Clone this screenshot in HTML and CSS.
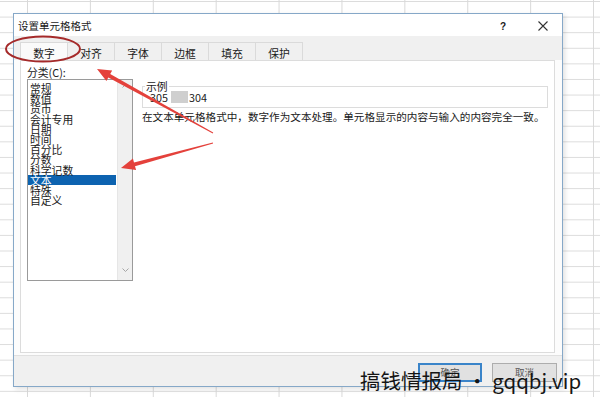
FILE: index.html
```html
<!DOCTYPE html>
<html lang="zh-CN">
<head>
<meta charset="utf-8">
<title>设置单元格格式</title>
<link rel="stylesheet" href="styles.css">
</head>
<body>
<div class="dialog">
  <div class="titlebar">
    <span class="title">设置单元格格式</span>
    <span class="help">?</span>
    <span class="close"><svg width="10" height="10" viewBox="0 0 10 10"><path d="M0.5 0.5 L9.5 9.5 M9.5 0.5 L0.5 9.5" stroke="#333" stroke-width="1.1" fill="none"/></svg></span>
  </div>
  <div class="tabs">
    <div class="tab active">数字</div>
    <div class="tab">对齐</div>
    <div class="tab">字体</div>
    <div class="tab">边框</div>
    <div class="tab">填充</div>
    <div class="tab">保护</div>
  </div>
  <div class="body">
    <div class="panel">
      <div class="cat">
        <div class="label">分类(<u>C</u>):</div>
        <div class="listbox">
          <ul class="items">
            <li>常规</li>
            <li>数值</li>
            <li>货币</li>
            <li>会计专用</li>
            <li>日期</li>
            <li>时间</li>
            <li>百分比</li>
            <li>分数</li>
            <li>科学记数</li>
            <li class="sel">文本</li>
            <li>特殊</li>
            <li>自定义</li>
          </ul>
          <div class="scrollbar">
            <svg width="7" height="4" viewBox="0 0 7 4"><path d="M0.5 3.5 L3.5 0.5 L6.5 3.5" stroke="#a6a6a6" fill="none"/></svg>
            <svg width="7" height="4" viewBox="0 0 7 4"><path d="M0.5 0.5 L3.5 3.5 L6.5 0.5" stroke="#a6a6a6" fill="none"/></svg>
          </div>
        </div>
      </div>
      <div class="detail">
        <fieldset class="sample">
          <legend>示例</legend>
          <div class="value">305<span class="blur"></span>304</div>
        </fieldset>
        <p class="desc">在文本单元格格式中，数字作为文本处理。单元格显示的内容与输入的内容完全一致。</p>
      </div>
    </div>
  </div>
  <div class="footer">
    <button class="btn default">确定</button>
    <button class="btn">取消</button>
  </div>
</div>
<svg class="annot" width="600" height="397" viewBox="0 0 600 397">
  <ellipse cx="43" cy="49" rx="37" ry="12.5" fill="none" stroke="#a52a2a" stroke-width="2"/>
  <polygon points="213.2,132.6 110.2,74.0 112.2,70.5 97,69 106.4,81.0 108.3,77.5 212.8,133.4" fill="#e4413b"/>
  <polygon points="212.9,142.5 134.0,162.4 132.9,158.5 121,168 136.1,170.1 135.0,166.2 213.1,143.5" fill="#e4413b"/>
</svg>
<div class="watermark">搞钱情报局 · gqqbj.vip</div>
</body>
</html>
```
FILE: styles.css
```css
html, body {
  margin: 0;
  padding: 0;
}
body {
  width: 600px;
  height: 397px;
  overflow: hidden;
  position: relative;
  box-sizing: border-box;
  padding: 13px 0 0 13px;
  background-color: #ffffff;
  background-image:
    linear-gradient(to right, #d9d9d9 1px, transparent 1px),
    linear-gradient(to bottom, #dcdcdc 1px, transparent 1px);
  background-size: 62.9px 15.6px, 62.9px 15.6px;
  background-position: 27px 1px, 27px 1px;
  font-family: "Noto Sans CJK SC", "Noto Sans", sans-serif;
  color: #1a1a1a;
}
.dialog {
  width: 550px;
  height: 374px;
  box-sizing: border-box;
  border: 1px solid #86a8c8;
  background: #fcfcfc;
  display: flex;
  flex-direction: column;
  box-shadow: 2px 2px 5px rgba(0, 0, 0, 0.12);
}
.titlebar {
  height: 22px;
  display: flex;
  align-items: center;
  padding: 2px 14px 0 4px;
  box-sizing: border-box;
  background: #ffffff;
  font-size: 10.5px;
}
.title {
  flex: 1;
  line-height: 20px;
}
.help {
  width: 10px;
  text-align: center;
  font-family: "Liberation Sans", sans-serif;
  font-weight: bold;
  font-size: 10px;
  margin-right: 30px;
}
.close {
  width: 10px;
  height: 10px;
  display: flex;
}
.tabs {
  height: 24px;
  box-sizing: border-box;
  background: #f0f0f0;
  padding-left: 6px;
  display: flex;
  align-items: flex-end;
}
.tab {
  width: 47px;
  height: 18px;
  box-sizing: border-box;
  padding-top: 2px;
  line-height: 16px;
  text-align: center;
  font-size: 10.8px;
  border: 1px solid #dadada;
  border-bottom: none;
  border-left: none;
  background: #f0f0f0;
}
.tab.active {
  width: 48px;
  border-left: 1px solid #dadada;
  background: #fafafa;
}
.body {
  flex: 1;
  padding: 0 7px 2px 6px;
  background: #fcfcfc;
  display: flex;
}
.panel {
  flex: 1;
  box-sizing: border-box;
  border: 1px solid #dcdcdc;
  background: #ffffff;
  padding: 5px 6px 0 6px;
  display: flex;
  gap: 9px;
}
.cat {
  width: 106px;
  display: flex;
  flex-direction: column;
}
.label {
  font-size: 10.8px;
  line-height: 13px;
  height: 13px;
}
.label u {
  text-decoration: none;
}
.listbox {
  height: 202px;
  box-sizing: border-box;
  border: 1px solid #9a9a9a;
  display: flex;
  background: #fff;
}
.items {
  list-style: none;
  margin: 0;
  padding: 3px 0 0 0;
  flex: 1;
}
.items li {
  font-size: 10.8px;
  line-height: 10.2px;
  height: 10.2px;
  padding-left: 2px;
  white-space: nowrap;
  margin-right: 1px;
}
.items li.sel {
  background: #0d63b0;
  color: #ffffff;
}
.scrollbar {
  width: 14px;
  background: #f0f0f0;
  border-left: 1px solid #e6e6e6;
  display: flex;
  flex-direction: column;
  justify-content: space-between;
  align-items: center;
  padding: 4px 0 8px;
}
.detail {
  flex: 1;
  padding-top: 14px;
}
.sample {
  margin: 0;
  padding: 0 6px 4px 7px;
  border: 1px solid #dcdcdc;
  min-width: 0;
}
.sample legend {
  font-size: 10.8px;
  line-height: 12px;
  padding: 0 1px;
  margin-left: -5px;
}
.value {
  font-size: 10.8px;
  line-height: 12px;
  height: 12px;
  margin-top: -1px;
  display: flex;
  align-items: center;
}
.blur {
  display: inline-block;
  width: 17px;
  height: 12px;
  margin: 0 1px 0 3px;
  background: #cfcfcf;
}
.desc {
  margin: 3px 0 0 0;
  font-size: 10.6px;
  line-height: 12px;
  white-space: nowrap;
}
.footer {
  height: 31px;
  box-sizing: border-box;
  background: #f0f0f0;
  border-top: 1px solid #e0e0e0;
  display: flex;
  justify-content: flex-end;
  align-items: flex-start;
  gap: 10px;
  padding: 7px 5px 0 0;
}
.btn {
  height: 19px;
  width: 65px;
  box-sizing: border-box;
  border: 1px solid #adadad;
  background: #e1e1e1;
  font-family: "Noto Sans CJK SC", sans-serif;
  font-size: 9.5px;
  line-height: 15px;
  padding: 0;
  color: #555;
}
.btn.default {
  width: 64px;
  border: 2px solid #3a84c9;
}
.annot {
  position: absolute;
  left: 0;
  top: 0;
  pointer-events: none;
}
.watermark {
  position: absolute;
  left: 360px;
  top: 367px;
  font-family: "Noto Sans CJK SC", "Noto Sans", sans-serif;
  font-size: 20.5px;
  line-height: 26px;
  color: #151515;
  white-space: nowrap;
}
```
